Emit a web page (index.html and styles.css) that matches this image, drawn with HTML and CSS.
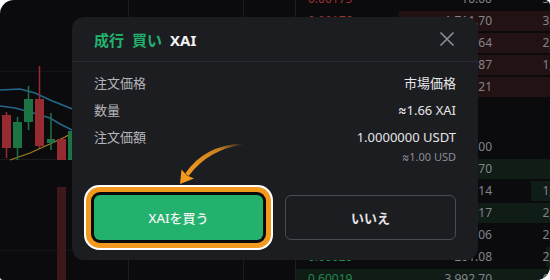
FILE: index.html
```html
<!DOCTYPE html>
<html lang="ja">
<head>
<meta charset="utf-8">
<link rel="stylesheet" href="styles.css">
</head>
<body>
<div class="app">
  <div class="chart">
    <svg width="295" height="280" viewBox="0 0 295 280">
      <line x1="128.5" y1="0" x2="128.5" y2="280" class="grid"/>
      <line x1="243.5" y1="0" x2="243.5" y2="280" class="grid"/>
      <line x1="0" y1="71.5" x2="295" y2="71.5" class="grid faint"/>
      <line x1="0" y1="159.5" x2="295" y2="159.5" class="grid"/>
      <line x1="0" y1="250.5" x2="295" y2="250.5" class="grid faint"/>
      <rect x="57" y="187" width="9" height="93" class="vol-red"/>
      <polyline points="0,90 20,89 35,93 50,100 65,106 80,112 110,118" class="ma-blue"/>
      <polyline points="0,106 15,108 30,112 50,118 60,124 72,130 90,134" class="ma-blue"/>
      <polyline points="10,160 30,153 50,144 65,137 72,133 90,127" class="ma-gold"/>
      <g class="c-red">
        <line x1="6.5" y1="112" x2="6.5" y2="158"/><rect x="2" y="115" width="9" height="33"/>
        <line x1="39.5" y1="66" x2="39.5" y2="148"/><rect x="35" y="99" width="9" height="47"/>
        <rect x="57" y="139" width="9" height="21"/>
      </g>
      <g class="c-green">
        <line x1="17.5" y1="117" x2="17.5" y2="160"/><rect x="13" y="122" width="9" height="26"/>
        <line x1="28.5" y1="86" x2="28.5" y2="130"/><rect x="24" y="99" width="9" height="23"/>
        <line x1="51" y1="113" x2="51" y2="150"/><rect x="47" y="139" width="8" height="4"/>
        <rect x="68" y="131" width="8" height="29"/>
      </g>
    </svg>
  </div>
  <div class="book">
    <div class="asks">
      <div class="row"><span class="price red">0.00175</span><span class="amt">10.00</span><span class="tot">3,562.80</span></div>
      <div class="row ask" style="--d:65%"><span class="price red">0.00176</span><span class="amt">1,711.70</span><span class="tot">3,052.80</span></div>
      <div class="row ask" style="--d:70%"><span class="price red">0.00177</span><span class="amt">762.64</span><span class="tot">2,241.10</span></div>
      <div class="row ask" style="--d:72%"><span class="price red">0.00178</span><span class="amt">812.87</span><span class="tot">1,478.46</span></div>
      <div class="row ask" style="--d:75%"><span class="price red">0.00179</span><span class="amt">665.21</span><span class="tot">665.59</span></div>
    </div>
    <div class="spread"></div>
    <div class="bids">
      <div class="row"><span class="price green">0.60025</span><span class="amt">100.00</span><span class="tot">100.00</span></div>
      <div class="row bid" style="--d:100%"><span class="price green">0.60024</span><span class="amt">870.70</span><span class="tot">970.70</span></div>
      <div class="row bid" style="--d:20%"><span class="price green">0.60023</span><span class="amt">157.14</span><span class="tot">1,127.84</span></div>
      <div class="row bid" style="--d:100%"><span class="price green">0.60022</span><span class="amt">912.17</span><span class="tot">2,040.01</span></div>
      <div class="row"><span class="price green">0.60021</span><span class="amt">20.06</span><span class="tot">2,060.07</span></div>
      <div class="row bid" style="--d:15%"><span class="price green">0.60020</span><span class="amt">201.08</span><span class="tot">2,261.15</span></div>
      <div class="row bid" style="--d:100%"><span class="price green">0.60019</span><span class="amt">3,992.70</span><span class="tot">6,253.85</span></div>
    </div>
  </div>

  <div class="modal">
    <div class="modal-head">
      <div class="title"><span class="green-t">成行</span><span class="green-t">買い</span><span class="sym">XAI</span></div>
      <svg class="close" width="16" height="16" viewBox="0 0 16 16"><path d="M1.5 1.5 L14.5 14.5 M14.5 1.5 L1.5 14.5"/></svg>
    </div>
    <div class="modal-body">
      <div class="info">
        <div class="line"><span class="label">注文価格</span><span class="value">市場価格</span></div>
        <div class="line"><span class="label">数量</span><span class="value"><span class="approx">≈</span>1.66 XAI</span></div>
        <div class="line"><span class="label">注文価額</span><span class="value">1.0000000 USDT</span></div>
        <div class="sub"><span class="approx">≈</span>1.00 USD</div>
      </div>
      <div class="actions">
        <button class="btn buy">XAIを買う</button>
        <button class="btn no">いいえ</button>
      </div>
    </div>
  </div>

  <svg class="arrow" width="550" height="280" viewBox="0 0 550 280">
    <defs>
      <linearGradient id="ag" x1="243" y1="144" x2="185" y2="176" gradientUnits="userSpaceOnUse">
        <stop offset="0" stop-color="#f39a1e" stop-opacity="0"/>
        <stop offset="0.35" stop-color="#f39a1e" stop-opacity="0.8"/>
        <stop offset="1" stop-color="#f39a1e"/>
      </linearGradient>
    </defs>
    <path d="M243,143.3 Q204,145.5 185.3,173.5 L188.7,176 Q208,149.5 243,144.7 Z" fill="url(#ag)"/>
    <polygon points="180,184 181.5,169.5 187,175.5 194,178.5" fill="#f39a1e"/>
  </svg>
</div>
</body>
</html>
```
FILE: styles.css
```css
* { box-sizing: border-box; }
html, body { margin: 0; padding: 0; background: #ffffff; }
body { width: 550px; height: 280px; overflow: hidden; font-family: "Noto Sans", "Noto Sans CJK JP", sans-serif; }

.app {
  position: relative;
  width: 550px;
  height: 280px;
  background: #0b0b0e;
  border-radius: 14px 5px 14px 3px;
  overflow: hidden;
  display: flex;
}

.chart { width: 295px; flex: none; }
.chart svg { display: block; }
.grid { stroke: #1b1b20; stroke-width: 1; }
.grid.faint { stroke: #141418; }
.vol-red { fill: #3d181b; }
.ma-blue { fill: none; stroke: #22688c; stroke-width: 1.5; }
.ma-gold { fill: none; stroke: #a57d22; stroke-width: 1.3; }
.c-red rect { fill: #962b31; }
.c-red line { stroke: #962b31; stroke-width: 1.5; }
.c-green rect { fill: #1c7444; }
.c-green line { stroke: #1c7444; stroke-width: 1.5; }

.book {
  flex: none;
  width: 255px;
  border-left: 1px solid #1d1d22;
  display: flex;
  flex-direction: column;
}
.asks, .bids { display: flex; flex-direction: column; gap: 2px; }
.asks { margin-top: -11px; }
.spread { height: 40px; flex: none; }
.row {
  width: 294px;
  height: 20px;
  flex: none;
  display: grid;
  grid-template-columns: 110px 74px 98px;
  padding-left: 12px;
  font-size: 12px;
  line-height: 20px;
  color: #84848a;
}
.row.ask { background: linear-gradient(to left, #231213 var(--d), transparent var(--d)); }
.row.bid { background: linear-gradient(to left, #0f1d16 var(--d), transparent var(--d)); }
.row .amt, .row .tot { text-align: right; }
.price.red { color: #a3302f; }
.price.green { color: #1f8a50; }

.modal {
  position: absolute;
  left: 72px;
  top: 17px;
  width: 406px;
  height: 243px;
  background: #1c1d21;
  border-radius: 12px;
  display: flex;
  flex-direction: column;
}
.modal-head {
  height: 45px;
  flex: none;
  padding: 0 22px 0 22px;
  display: flex;
  align-items: center;
  justify-content: space-between;
  border-bottom: 1px solid #2a2b30;
}
.title {
  display: flex;
  gap: 8px;
  font-size: 15px;
  font-weight: 700;
  line-height: 20px;
  padding-top: 2px;
}
.green-t { color: #22b26d; }
.sym { color: #f2f2f2; font-family: "Noto Sans", sans-serif; }
.close { display: block; margin-right: 1px; }
.close path { stroke: #8d8e93; stroke-width: 1.6; fill: none; }

.modal-body {
  flex: 1;
  padding: 12px 22px 20px;
  display: flex;
  flex-direction: column;
  justify-content: space-between;
}
.info { display: flex; flex-direction: column; }
.line {
  display: flex;
  justify-content: space-between;
  font-size: 13px;
  line-height: 18px;
  margin-bottom: 9px;
}
.line:nth-child(3) { margin-bottom: 4px; }
.approx { font-family: "Inter", "DejaVu Sans", "Roboto", sans-serif; }
.label { color: #b4b4b9; }
.value { color: #e6e6e8; }
.sub {
  text-align: right;
  font-size: 11px;
  line-height: 14px;
  color: #8c8c92;
}

.actions { display: flex; gap: 22px; }
.btn {
  flex: 1;
  height: 45px;
  border-radius: 6px;
  font-family: "Noto Sans", "Noto Sans CJK JP", sans-serif;
  font-size: 13px;
  font-weight: 500;
  padding: 0;
}
.btn.buy {
  background: #22b26d;
  color: #f4f4f4;
  border: none;
  box-shadow: 0 0 0 3px #0a0a0b, 0 0 0 8px #f39a1e, 0 0 0 10px #ffffff;
}
.btn.no {
  background: transparent;
  color: #e4e4e6;
  border: 1px solid #4a4b50;
  font-weight: 600;
}

.arrow { position: absolute; left: 0; top: 0; pointer-events: none; }
```
